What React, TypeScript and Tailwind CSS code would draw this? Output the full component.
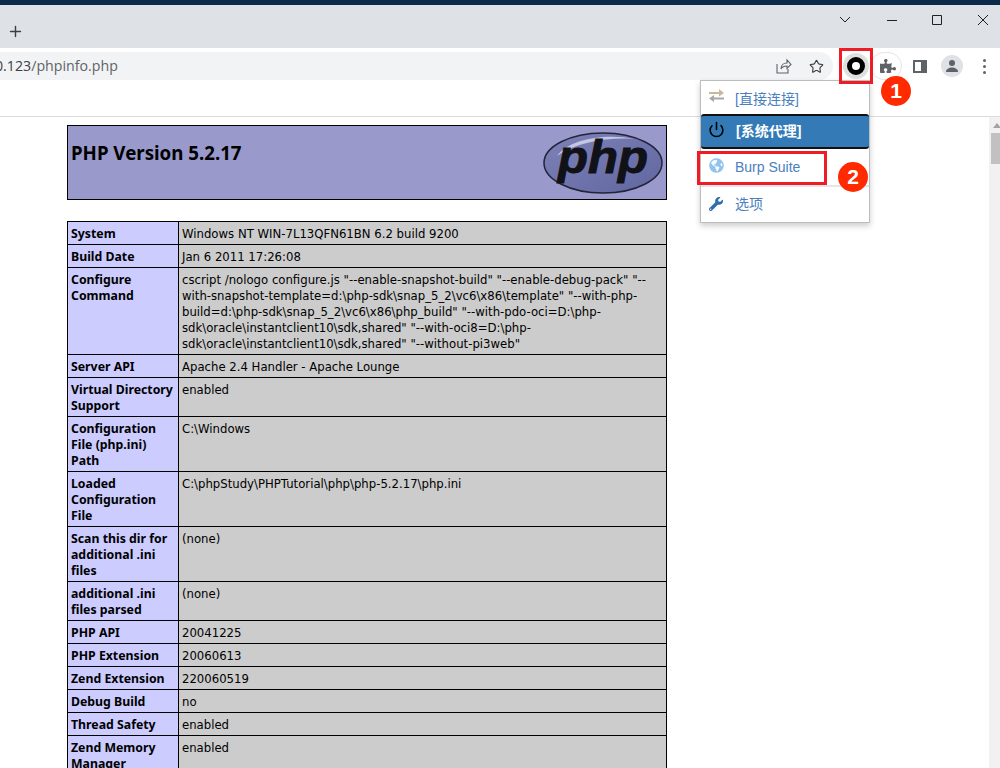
import { Plus, Power, Star } from "lucide-react";
import { FaGlobeAmericas, FaPuzzlePiece, FaWrench } from "react-icons/fa";

const rows: [string, string][] = [
  ["System", "Windows NT WIN-7L13QFN61BN 6.2 build 9200"],
  ["Build Date", "Jan 6 2011 17:26:08"],
  [
    "Configure Command",
    'cscript /nologo configure.js "--enable-snapshot-build" "--enable-debug-pack" "--with-snapshot-template=d:\\php-sdk\\snap_5_2\\vc6\\x86\\template" "--with-php-build=d:\\php-sdk\\snap_5_2\\vc6\\x86\\php_build" "--with-pdo-oci=D:\\php-sdk\\oracle\\instantclient10\\sdk,shared" "--with-oci8=D:\\php-sdk\\oracle\\instantclient10\\sdk,shared" "--without-pi3web"',
  ],
  ["Server API", "Apache 2.4 Handler - Apache Lounge"],
  ["Virtual Directory Support", "enabled"],
  ["Configuration File (php.ini) Path", "C:\\Windows"],
  ["Loaded Configuration File", "C:\\phpStudy\\PHPTutorial\\php\\php-5.2.17\\php.ini"],
  ["Scan this dir for additional .ini files", "(none)"],
  ["additional .ini files parsed", "(none)"],
  ["PHP API", "20041225"],
  ["PHP Extension", "20060613"],
  ["Zend Extension", "220060519"],
  ["Debug Build", "no"],
  ["Thread Safety", "enabled"],
  ["Zend Memory Manager", "enabled"],
];

function PhpLogo() {
  return (
    <svg width="120" height="62" viewBox="0 0 120 62" className="shrink-0">
      <defs>
        <linearGradient id="php-oval" x1="0" y1="0" x2="1" y2="1">
          <stop offset="0" stopColor="#7d82b8" />
          <stop offset="1" stopColor="#62669f" />
        </linearGradient>
      </defs>
      <ellipse cx="60" cy="31" rx="59" ry="30" fill="url(#php-oval)" stroke="#23233a" strokeWidth="1.5" />
      <path d="M14 24C26 7 62 1 92 7 66 5 34 10 14 24Z" fill="#c4c6e2" />
      <text
        x="60"
        y="41"
        textAnchor="middle"
        fontFamily="'Liberation Sans', sans-serif"
        fontSize="46"
        fontStyle="italic"
        fontWeight="700"
        fill="#111118"
        stroke="#111118"
        strokeWidth="1"
        textLength="90"
        lengthAdjust="spacingAndGlyphs"
      >
        php
      </text>
    </svg>
  );
}

function Browser() {
  return (
    <>
      <div className="h-[5px] bg-[#0b2a4a]" />
      {/* Tab strip */}
      <div className="flex h-[43px] items-start justify-between bg-[#dee1e6] text-[#3c4043]">
        <Plus size={17} strokeWidth={2} className="ml-[7px] mt-[18px]" />
        <svg width="160" height="14" viewBox="0 0 160 14" fill="none" stroke="#202124" strokeWidth="1" className="mt-[9px]">
          <path d="M0 3l5 5 5-5" />
          <path d="M47 6.500h10" />
          <path d="M92.500 1.500h9v9h-9z" />
          <path d="M138 1l10 10M148 1l-10 10" />
        </svg>
      </div>
      {/* Toolbar */}
      <div className="flex h-[32px] items-end bg-white">
        <div className="flex h-[28px] w-[833px] items-center justify-between overflow-hidden rounded-r-[14px] bg-[#f1f3f4] font-['Open_Sans',sans-serif] text-[14.2px]">
          <span className="-ml-[5px] text-[#5f6368]">
            <span className="text-[#3c4043]">0.123</span>/phpinfo.php
          </span>
          <div className="flex items-center gap-[17px] pr-[9px] text-[#5f6368]">
            <svg width="16" height="16" viewBox="0 0 16 16" fill="none" stroke="currentColor" strokeWidth="1.1">
              <path d="M1 6v9h11v-4M5 11c0-4 3-6 6-6V2l4 4.500-4 4V8C8 8 6 9 5 11Z" />
            </svg>
            <Star size={15} strokeWidth={1.8} className="text-[#3c4043]" />
          </div>
        </div>
        <div className="relative flex h-[28px] flex-1 items-center">
          <div className="absolute left-[37px] top-0 h-[28px] w-[32px] rounded-full border border-[#e4e4e4]" />
          <div className="relative ml-[10px] flex h-[26px] w-[26px] items-center justify-center rounded-full bg-[#dfdfdf]">
            <div className="-mt-[1px] h-[18px] w-[18px] rounded-full border-[5px] border-black bg-white" />
          </div>
          <FaPuzzlePiece size={16} className="relative ml-[11px] text-[#5f6368]" />
          <div className="ml-[17px] flex h-[13px] w-[14px] border-2 border-[#5f6368] bg-white">
            <div className="ml-auto h-full w-[4px] bg-[#5f6368]" />
          </div>
          <div className="ml-[14px] flex h-[22px] w-[22px] items-center justify-center overflow-hidden rounded-full bg-[#dee1e6]">
            <svg width="14" height="14" viewBox="0 0 14 14" fill="#5f6368">
              <circle cx="7" cy="4" r="3" />
              <path d="M1 13c0-3 3-4.500 6-4.500s6 1.500 6 4.500Z" />
            </svg>
          </div>
          <div className="ml-[20px] flex flex-col gap-[3px]">
            <span className="h-[3px] w-[3px] rounded-full bg-[#5f6368]" />
            <span className="h-[3px] w-[3px] rounded-full bg-[#5f6368]" />
            <span className="h-[3px] w-[3px] rounded-full bg-[#5f6368]" />
          </div>
        </div>
      </div>
      <div className="h-[37px] border-b border-[#dadce0] bg-white" />
    </>
  );
}

function ProxyMenu() {
  const font = "font-['Liberation_Sans','Noto_Sans_CJK_SC',sans-serif] text-[14px]";
  return (
    <div className={`absolute left-[700px] top-[80px] w-[170px] border border-[#bdbdbd] bg-white text-[#4a80bd] shadow-[0_3px_6px_rgba(0,0,0,0.2)] ${font}`}>
      <div className="flex h-[33px] items-center">
        <svg width="15" height="13" viewBox="0 0 15 13" className="ml-[8px] mr-[11px] -mt-[5px]">
          <path d="M0 3h10V0l5 4-5 3.500V5H0Z" fill="#c7b99a" />
          <path d="M15 8.500H5V6L0 9.500 5 13v-2.500h10Z" fill="#a8a8a8" />
        </svg>
        <span className="pt-[3px]">[直接连接]</span>
      </div>
      <div className="flex h-[35px] items-center rounded-[3px] border-y-2 border-[#111] bg-[#337ab7] font-bold text-white">
        <Power size={17} strokeWidth={2.2} className="ml-[7px] mr-[11px] -mt-[4px] text-black" />
        <span>[系统代理]</span>
      </div>
      <div className="flex h-[36px] items-center">
        <FaGlobeAmericas size={15} className="ml-[8px] mr-[11px] -mt-[3px] text-[#90c3ee]" />
        <span>Burp Suite</span>
      </div>
      <div className="h-[2px] bg-[#e5e5e5]" />
      <div className="flex h-[35px] items-center">
        <FaWrench size={14} className="ml-[8px] mr-[12px] -mt-[2px] text-[#2f6ea8]" />
        <span>选项</span>
      </div>
    </div>
  );
}

function Badge({ n, className }: { n: number; className: string }) {
  return (
    <div className={`absolute flex h-[30px] w-[30px] items-center justify-center rounded-full bg-[#ff2a00] font-['Liberation_Sans',sans-serif] text-[21px] font-bold text-white ${className}`}>
      {n}
    </div>
  );
}

export default function App() {
  return (
    <div className="relative h-screen overflow-hidden bg-white">
      <Browser />

      <div className="flex h-[651px]">
        {/* phpinfo page */}
        <div className="flex-1 overflow-hidden pl-[67px] pt-[8px] font-['DejaVu_Sans',sans-serif] text-[11.7px] leading-[16px] text-black">
          <div className="flex h-[75px] w-[600px] items-center justify-between border border-black bg-[#9999cc] pl-[3px] pr-[3px]">
            <h1 className="-mt-[19px] font-['Noto_Sans',sans-serif] text-[18.7px] font-bold leading-[20px]">PHP Version 5.2.17</h1>
            <PhpLogo />
          </div>
          <table className="mt-[21px] w-[600px] table-fixed border-collapse">
            <tbody>
              {rows.map(([name, value]) => (
                <tr key={name}>
                  <td className="w-[111px] border border-black bg-[#ccccff] px-[3px] pt-[4px] pb-[2px] align-top font-['Noto_Sans',sans-serif] text-[12.3px] font-bold">
                    {name}
                  </td>
                  <td className="border border-black bg-[#cccccc] px-[3px] pt-[4px] pb-[2px] align-top break-words">
                    {value}
                  </td>
                </tr>
              ))}
            </tbody>
          </table>
        </div>
        {/* Scrollbar */}
        <div className="relative w-[11px] bg-[#f1f1f1]">
          <div className="mt-[6px] ml-[4px] h-0 w-0 border-x-[4px] border-b-[5px] border-x-transparent border-b-[#a3a3a3]" />
          <div className="absolute left-[2px] right-0 top-[16px] h-[31px] bg-[#c1c1c1]" />
        </div>
      </div>

      <ProxyMenu />

      {/* Tutorial annotations */}
      <div className="absolute left-[839px] top-[48px] h-[36px] w-[34px] border-[3px] border-[#ee1c25]" />
      <div className="absolute left-[697px] top-[151px] h-[34px] w-[130px] border-[3px] border-[#ee1c25]" />
      <Badge n={1} className="left-[881px] top-[76px]" />
      <Badge n={2} className="left-[838px] top-[162px]" />
    </div>
  );
}
